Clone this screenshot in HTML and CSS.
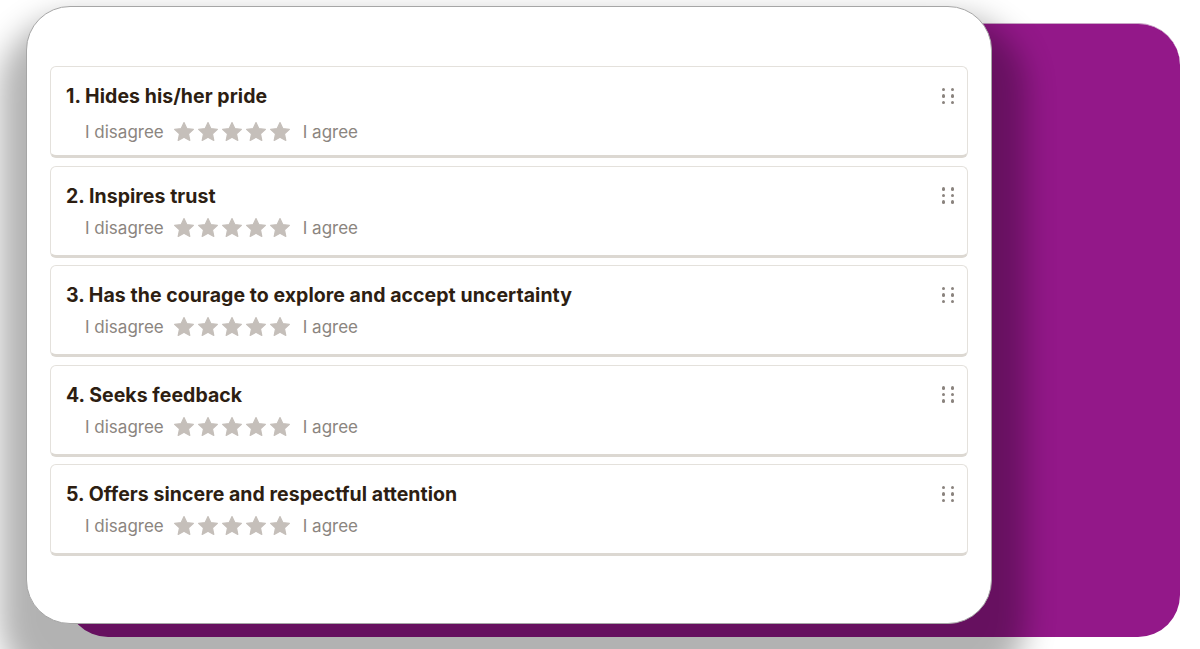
FILE: index.html
```html
<!DOCTYPE html>
<html lang="en">
<head>
<meta charset="utf-8">
<title>Survey</title>
<link rel="stylesheet" href="styles.css">
</head>
<body>
<div class="stage">
  <div class="backdrop"></div>
  <div class="card">
    <ul class="list">
      <li class="item item--first">
        <div class="item-head">
          <h3 class="title">1. Hides his/her pride</h3>
          <span class="handle"><i></i><i></i><i></i><i></i><i></i><i></i></span>
        </div>
        <div class="scale">
          <span class="label">I disagree</span>
          <span class="stars">
            <svg viewBox="0 0 24 24"><path d="M12 2.6l2.8 6 6.6.8-4.9 4.5 1.3 6.5L12 17.2l-5.8 3.2 1.3-6.5-4.9-4.5 6.6-.8z"/></svg>
            <svg viewBox="0 0 24 24"><path d="M12 2.6l2.8 6 6.6.8-4.9 4.5 1.3 6.5L12 17.2l-5.8 3.2 1.3-6.5-4.9-4.5 6.6-.8z"/></svg>
            <svg viewBox="0 0 24 24"><path d="M12 2.6l2.8 6 6.6.8-4.9 4.5 1.3 6.5L12 17.2l-5.8 3.2 1.3-6.5-4.9-4.5 6.6-.8z"/></svg>
            <svg viewBox="0 0 24 24"><path d="M12 2.6l2.8 6 6.6.8-4.9 4.5 1.3 6.5L12 17.2l-5.8 3.2 1.3-6.5-4.9-4.5 6.6-.8z"/></svg>
            <svg viewBox="0 0 24 24"><path d="M12 2.6l2.8 6 6.6.8-4.9 4.5 1.3 6.5L12 17.2l-5.8 3.2 1.3-6.5-4.9-4.5 6.6-.8z"/></svg>
          </span>
          <span class="label">I agree</span>
        </div>
      </li>
      <li class="item">
        <div class="item-head">
          <h3 class="title">2. Inspires trust</h3>
          <span class="handle"><i></i><i></i><i></i><i></i><i></i><i></i></span>
        </div>
        <div class="scale">
          <span class="label">I disagree</span>
          <span class="stars">
            <svg viewBox="0 0 24 24"><path d="M12 2.6l2.8 6 6.6.8-4.9 4.5 1.3 6.5L12 17.2l-5.8 3.2 1.3-6.5-4.9-4.5 6.6-.8z"/></svg>
            <svg viewBox="0 0 24 24"><path d="M12 2.6l2.8 6 6.6.8-4.9 4.5 1.3 6.5L12 17.2l-5.8 3.2 1.3-6.5-4.9-4.5 6.6-.8z"/></svg>
            <svg viewBox="0 0 24 24"><path d="M12 2.6l2.8 6 6.6.8-4.9 4.5 1.3 6.5L12 17.2l-5.8 3.2 1.3-6.5-4.9-4.5 6.6-.8z"/></svg>
            <svg viewBox="0 0 24 24"><path d="M12 2.6l2.8 6 6.6.8-4.9 4.5 1.3 6.5L12 17.2l-5.8 3.2 1.3-6.5-4.9-4.5 6.6-.8z"/></svg>
            <svg viewBox="0 0 24 24"><path d="M12 2.6l2.8 6 6.6.8-4.9 4.5 1.3 6.5L12 17.2l-5.8 3.2 1.3-6.5-4.9-4.5 6.6-.8z"/></svg>
          </span>
          <span class="label">I agree</span>
        </div>
      </li>
      <li class="item">
        <div class="item-head">
          <h3 class="title">3. Has the courage to explore and accept uncertainty</h3>
          <span class="handle"><i></i><i></i><i></i><i></i><i></i><i></i></span>
        </div>
        <div class="scale">
          <span class="label">I disagree</span>
          <span class="stars">
            <svg viewBox="0 0 24 24"><path d="M12 2.6l2.8 6 6.6.8-4.9 4.5 1.3 6.5L12 17.2l-5.8 3.2 1.3-6.5-4.9-4.5 6.6-.8z"/></svg>
            <svg viewBox="0 0 24 24"><path d="M12 2.6l2.8 6 6.6.8-4.9 4.5 1.3 6.5L12 17.2l-5.8 3.2 1.3-6.5-4.9-4.5 6.6-.8z"/></svg>
            <svg viewBox="0 0 24 24"><path d="M12 2.6l2.8 6 6.6.8-4.9 4.5 1.3 6.5L12 17.2l-5.8 3.2 1.3-6.5-4.9-4.5 6.6-.8z"/></svg>
            <svg viewBox="0 0 24 24"><path d="M12 2.6l2.8 6 6.6.8-4.9 4.5 1.3 6.5L12 17.2l-5.8 3.2 1.3-6.5-4.9-4.5 6.6-.8z"/></svg>
            <svg viewBox="0 0 24 24"><path d="M12 2.6l2.8 6 6.6.8-4.9 4.5 1.3 6.5L12 17.2l-5.8 3.2 1.3-6.5-4.9-4.5 6.6-.8z"/></svg>
          </span>
          <span class="label">I agree</span>
        </div>
      </li>
      <li class="item">
        <div class="item-head">
          <h3 class="title">4. Seeks feedback</h3>
          <span class="handle"><i></i><i></i><i></i><i></i><i></i><i></i></span>
        </div>
        <div class="scale">
          <span class="label">I disagree</span>
          <span class="stars">
            <svg viewBox="0 0 24 24"><path d="M12 2.6l2.8 6 6.6.8-4.9 4.5 1.3 6.5L12 17.2l-5.8 3.2 1.3-6.5-4.9-4.5 6.6-.8z"/></svg>
            <svg viewBox="0 0 24 24"><path d="M12 2.6l2.8 6 6.6.8-4.9 4.5 1.3 6.5L12 17.2l-5.8 3.2 1.3-6.5-4.9-4.5 6.6-.8z"/></svg>
            <svg viewBox="0 0 24 24"><path d="M12 2.6l2.8 6 6.6.8-4.9 4.5 1.3 6.5L12 17.2l-5.8 3.2 1.3-6.5-4.9-4.5 6.6-.8z"/></svg>
            <svg viewBox="0 0 24 24"><path d="M12 2.6l2.8 6 6.6.8-4.9 4.5 1.3 6.5L12 17.2l-5.8 3.2 1.3-6.5-4.9-4.5 6.6-.8z"/></svg>
            <svg viewBox="0 0 24 24"><path d="M12 2.6l2.8 6 6.6.8-4.9 4.5 1.3 6.5L12 17.2l-5.8 3.2 1.3-6.5-4.9-4.5 6.6-.8z"/></svg>
          </span>
          <span class="label">I agree</span>
        </div>
      </li>
      <li class="item">
        <div class="item-head">
          <h3 class="title">5. Offers sincere and respectful attention</h3>
          <span class="handle"><i></i><i></i><i></i><i></i><i></i><i></i></span>
        </div>
        <div class="scale">
          <span class="label">I disagree</span>
          <span class="stars">
            <svg viewBox="0 0 24 24"><path d="M12 2.6l2.8 6 6.6.8-4.9 4.5 1.3 6.5L12 17.2l-5.8 3.2 1.3-6.5-4.9-4.5 6.6-.8z"/></svg>
            <svg viewBox="0 0 24 24"><path d="M12 2.6l2.8 6 6.6.8-4.9 4.5 1.3 6.5L12 17.2l-5.8 3.2 1.3-6.5-4.9-4.5 6.6-.8z"/></svg>
            <svg viewBox="0 0 24 24"><path d="M12 2.6l2.8 6 6.6.8-4.9 4.5 1.3 6.5L12 17.2l-5.8 3.2 1.3-6.5-4.9-4.5 6.6-.8z"/></svg>
            <svg viewBox="0 0 24 24"><path d="M12 2.6l2.8 6 6.6.8-4.9 4.5 1.3 6.5L12 17.2l-5.8 3.2 1.3-6.5-4.9-4.5 6.6-.8z"/></svg>
            <svg viewBox="0 0 24 24"><path d="M12 2.6l2.8 6 6.6.8-4.9 4.5 1.3 6.5L12 17.2l-5.8 3.2 1.3-6.5-4.9-4.5 6.6-.8z"/></svg>
          </span>
          <span class="label">I agree</span>
        </div>
      </li>
    </ul>
  </div>
</div>
</body>
</html>
```

FILE: styles.css
```css
* { box-sizing: border-box; }

html, body {
  margin: 0;
  padding: 0;
  width: 1200px;
  height: 649px;
  overflow: hidden;
  background: #ffffff;
  font-family: Inter, "Noto Sans", "Liberation Sans", sans-serif;
}

.stage {
  display: grid;
  width: 1200px;
  height: 649px;
}

.backdrop,
.card {
  grid-area: 1 / 1;
}

.backdrop {
  margin: 23px 0 0 66px;
  width: 1114px;
  height: 614px;
  background: #931889;
  border-radius: 42px;
  border-top: 1px solid #c9a6c6;
}

.card {
  margin: 6px 0 0 26px;
  width: 966px;
  height: 618px;
  background: #ffffff;
  border: 1px solid #a6a6a6;
  border-radius: 44px;
  box-shadow: 4px 40px 30px 30px rgba(0, 0, 0, 0.3);
  padding: 59px 23px 0 23px;
}

.list {
  list-style: none;
  margin: 0;
  padding: 0;
  display: flex;
  flex-direction: column;
  gap: 7.5px;
}

.item {
  height: 92px;
  border: 1px solid #e4e1dc;
  border-bottom: 3px solid #dcd8d2;
  border-radius: 6px;
  padding: 17px 13px 0 15px;
  background: #ffffff;
}

.item-head {
  display: flex;
  align-items: center;
  justify-content: space-between;
  height: 24px;
}

.title {
  margin: 0;
  font-size: 19.5px;
  font-weight: 700;
  color: #2d1e12;
  letter-spacing: 0.05px;
  line-height: 24px;
}

.handle {
  display: grid;
  grid-template-columns: 3.5px 3.5px;
  column-gap: 5.5px;
  row-gap: 3px;
}

.handle i {
  display: block;
  width: 3.5px;
  height: 3.5px;
  border-radius: 50%;
  background: #8a837e;
}

.scale {
  display: flex;
  align-items: center;
  gap: 9px;
  margin: 8px 0 0 19px;
  height: 24px;
}

.item--first .scale {
  margin-top: 12px;
}

.label {
  font-size: 17px;
  color: #8b8580;
  line-height: 24px;
}

.stars {
  display: flex;
  margin: 0 2px 0 -1px;
}

.stars svg {
  width: 24px;
  height: 24px;
  display: block;
}

.stars path {
  fill: #c5bfba;
  stroke: #c5bfba;
  stroke-width: 1.2;
  stroke-linejoin: round;
}
```
